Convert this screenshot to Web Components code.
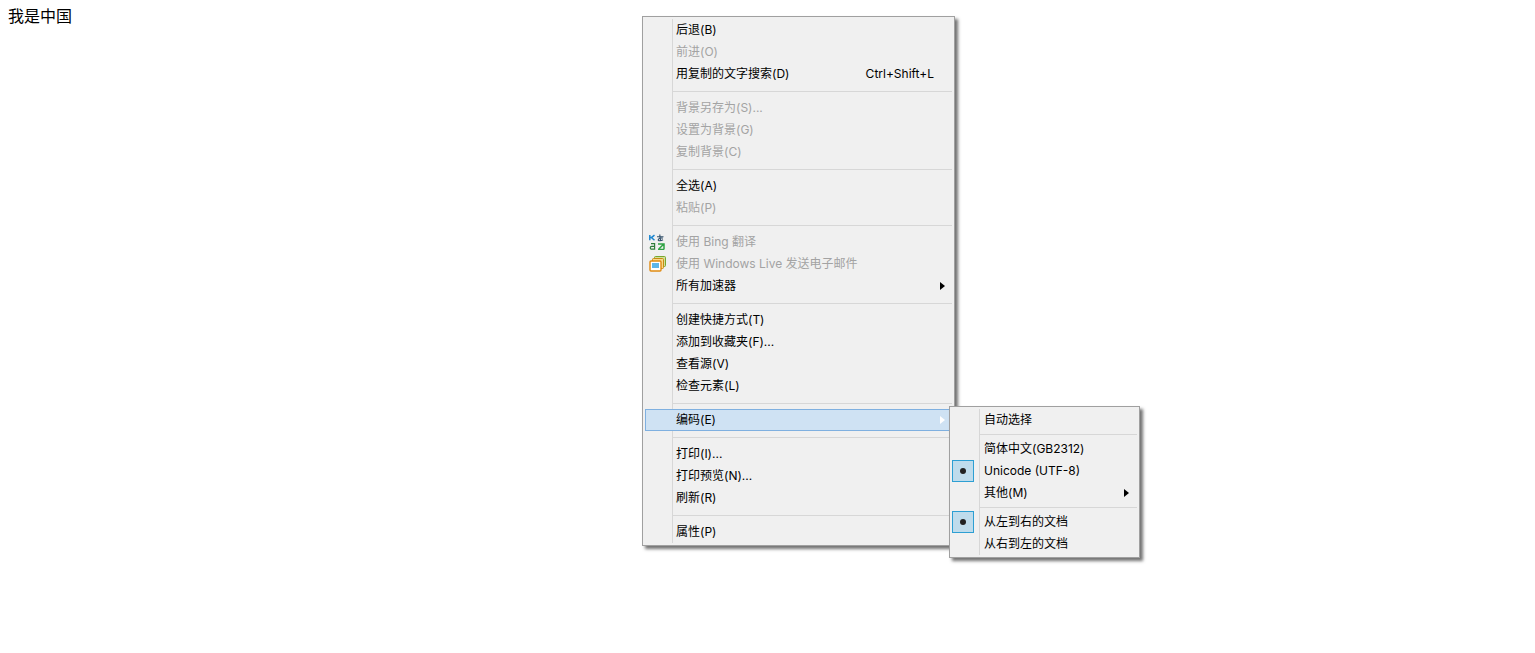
<!DOCTYPE html>
<html><head><meta charset="utf-8">
<style>
html,body{margin:0;padding:0;background:#fff}
body{height:653px;overflow:hidden;position:relative;font-family:"Noto Sans","Noto Sans CJK SC",sans-serif}
.t{padding:6px 8px 8px;font:16px/18px "Noto Sans CJK SC",sans-serif;color:#000}
#m{left:642px;top:16px;width:313px;--gutter:29px;--ic:31px}
#s{left:949px;top:406px;width:191px;--gutter:29px;--ic:32px;--ar:8px}
</style></head><body>
<div class="t">我是中国</div>
<template id="tm"><style>
:host{display:block;position:absolute;box-sizing:border-box;border:1px solid #a0a0a0;padding:2px;
background:#f0f0f0 linear-gradient(#d7d7d7,#d7d7d7) no-repeat var(--gutter) 2px/1px calc(100% - 4px);
box-shadow:3px 3px 3px rgba(70,70,70,.75);z-index:var(--z,1)}
</style><slot></slot></template>
<template id="ti"><style>
:host{display:flex;align-items:center;position:relative;box-sizing:border-box;height:22px;padding:0 18px 0 0;
font:12px/22px Inter,"Noto Sans CJK SC",sans-serif;color:#000;white-space:nowrap}
:host([disabled]){color:#a3a3a3}
:host([active]){background:#cfe2f3;box-shadow:inset 0 0 0 1px #7fb0e0}
.ic{flex:none;width:var(--ic,31px);height:22px;display:flex;align-items:center;padding-left:4px;box-sizing:border-box}
.lb{flex:1}
.sc{flex:none}
.ar{position:absolute;right:var(--ar,7px);top:7px;width:0;height:0;border-left:5px solid #000;border-top:4px solid transparent;border-bottom:4px solid transparent;display:none}
:host([arrow]) .ar{display:block}
:host([active]) .ar{border-left-color:#fff}
.ck{display:none;position:absolute;left:0;top:0;width:22px;height:22px;box-sizing:border-box;background:#bfdcec;border:1px solid #2d9fd3;align-items:center;justify-content:center}
.ck i{width:6px;height:6px;border-radius:50%;background:#222}
:host([checked]) .ck{display:flex}
</style><span class="ic"><slot name="icon"></slot></span><span class="ck"><i></i></span><span class="lb"><slot></slot></span><span class="sc"></span><span class="ar"></span></template>
<template id="ts"><style>
:host{display:block;box-sizing:border-box;height:var(--h,12px);padding:calc((var(--h,12px) - 1px)/2) 0 0 27px}
div{height:1px;background:#d7d7d7}
</style><div></div></template>

<ctx-menu id="m">
<ctx-item>后退(B)</ctx-item>
<ctx-item disabled>前进(O)</ctx-item>
<ctx-item shortcut="Ctrl+Shift+L">用复制的文字搜索(D)</ctx-item>
<ctx-sep></ctx-sep>
<ctx-item disabled>背景另存为(S)...</ctx-item>
<ctx-item disabled>设置为背景(G)</ctx-item>
<ctx-item disabled>复制背景(C)</ctx-item>
<ctx-sep></ctx-sep>
<ctx-item>全选(A)</ctx-item>
<ctx-item disabled>粘贴(P)</ctx-item>
<ctx-sep></ctx-sep>
<ctx-item disabled><svg slot="icon" width="16" height="16" viewBox="0 0 16 16" fill="none">
<path d="M0.8 1v5.2M0.8 3.6h1.4M5.5 1.2L2.4 3.6l3.1 2.6" stroke="#1c86cf" stroke-width="1.5"/>
<path d="M8 2.8h6.5M10.8 0.6c0 2 .2 4.5 1 6M13.8 4.2c-1.2-.5-4.4.2-4.6 1.7-.2 1.3 3 1 4.8-.2" stroke="#33506a" stroke-width="1.1"/>
<path d="M2 9.6h3.6v5.6H2.7a1.4 1.4 0 0 1 0-2.9h2.9" stroke="#2f7d3a" stroke-width="1.2"/>
<path d="M9 10h6v5.6M14.6 10.2l-4.8 4.8M9 15.4h6" stroke="#2fa344" stroke-width="1.5"/>
</svg>使用 Bing 翻译</ctx-item>
<ctx-item disabled><svg slot="icon" width="17" height="16" viewBox="0 0 17 16" fill="none">
<rect x="5.5" y="0.5" width="11" height="10" rx="1" fill="#cfe39a" stroke="#7aa52e"/>
<rect x="3.5" y="2.5" width="11" height="10" rx="1" fill="#f7d98a" stroke="#c98a12"/>
<rect x="1" y="5" width="11" height="10" rx="1" fill="#fff" stroke="#e08a10" stroke-width="1.4"/>
<rect x="3" y="7" width="7" height="5" fill="#5cb6ea"/>
</svg>使用 Windows Live 发送电子邮件</ctx-item>
<ctx-item arrow>所有加速器</ctx-item>
<ctx-sep></ctx-sep>
<ctx-item>创建快捷方式(T)</ctx-item>
<ctx-item>添加到收藏夹(F)...</ctx-item>
<ctx-item>查看源(V)</ctx-item>
<ctx-item>检查元素(L)</ctx-item>
<ctx-sep></ctx-sep>
<ctx-item arrow active>编码(E)</ctx-item>
<ctx-sep></ctx-sep>
<ctx-item>打印(I)...</ctx-item>
<ctx-item>打印预览(N)...</ctx-item>
<ctx-item>刷新(R)</ctx-item>
<ctx-sep></ctx-sep>
<ctx-item>属性(P)</ctx-item>
</ctx-menu>

<ctx-menu id="s" style="--z:2;--h:7px">
<ctx-item>自动选择</ctx-item>
<ctx-sep></ctx-sep>
<ctx-item>简体中文(GB2312)</ctx-item>
<ctx-item checked>Unicode (UTF-8)</ctx-item>
<ctx-item arrow>其他(M)</ctx-item>
<ctx-sep></ctx-sep>
<ctx-item checked>从左到右的文档</ctx-item>
<ctx-item>从右到左的文档</ctx-item>
</ctx-menu>

<script>
function mount(el,id){const r=el.attachShadow({mode:'open'});r.appendChild(document.getElementById(id).content.cloneNode(true));return r}
customElements.define('ctx-menu',class extends HTMLElement{constructor(){super();mount(this,'tm')}});
customElements.define('ctx-sep',class extends HTMLElement{constructor(){super();mount(this,'ts')}});
customElements.define('ctx-item',class extends HTMLElement{
  constructor(){super();this._r=mount(this,'ti')}
  connectedCallback(){this._r.querySelector('.sc').textContent=this.getAttribute('shortcut')||''}
});
</script>
</body></html>
